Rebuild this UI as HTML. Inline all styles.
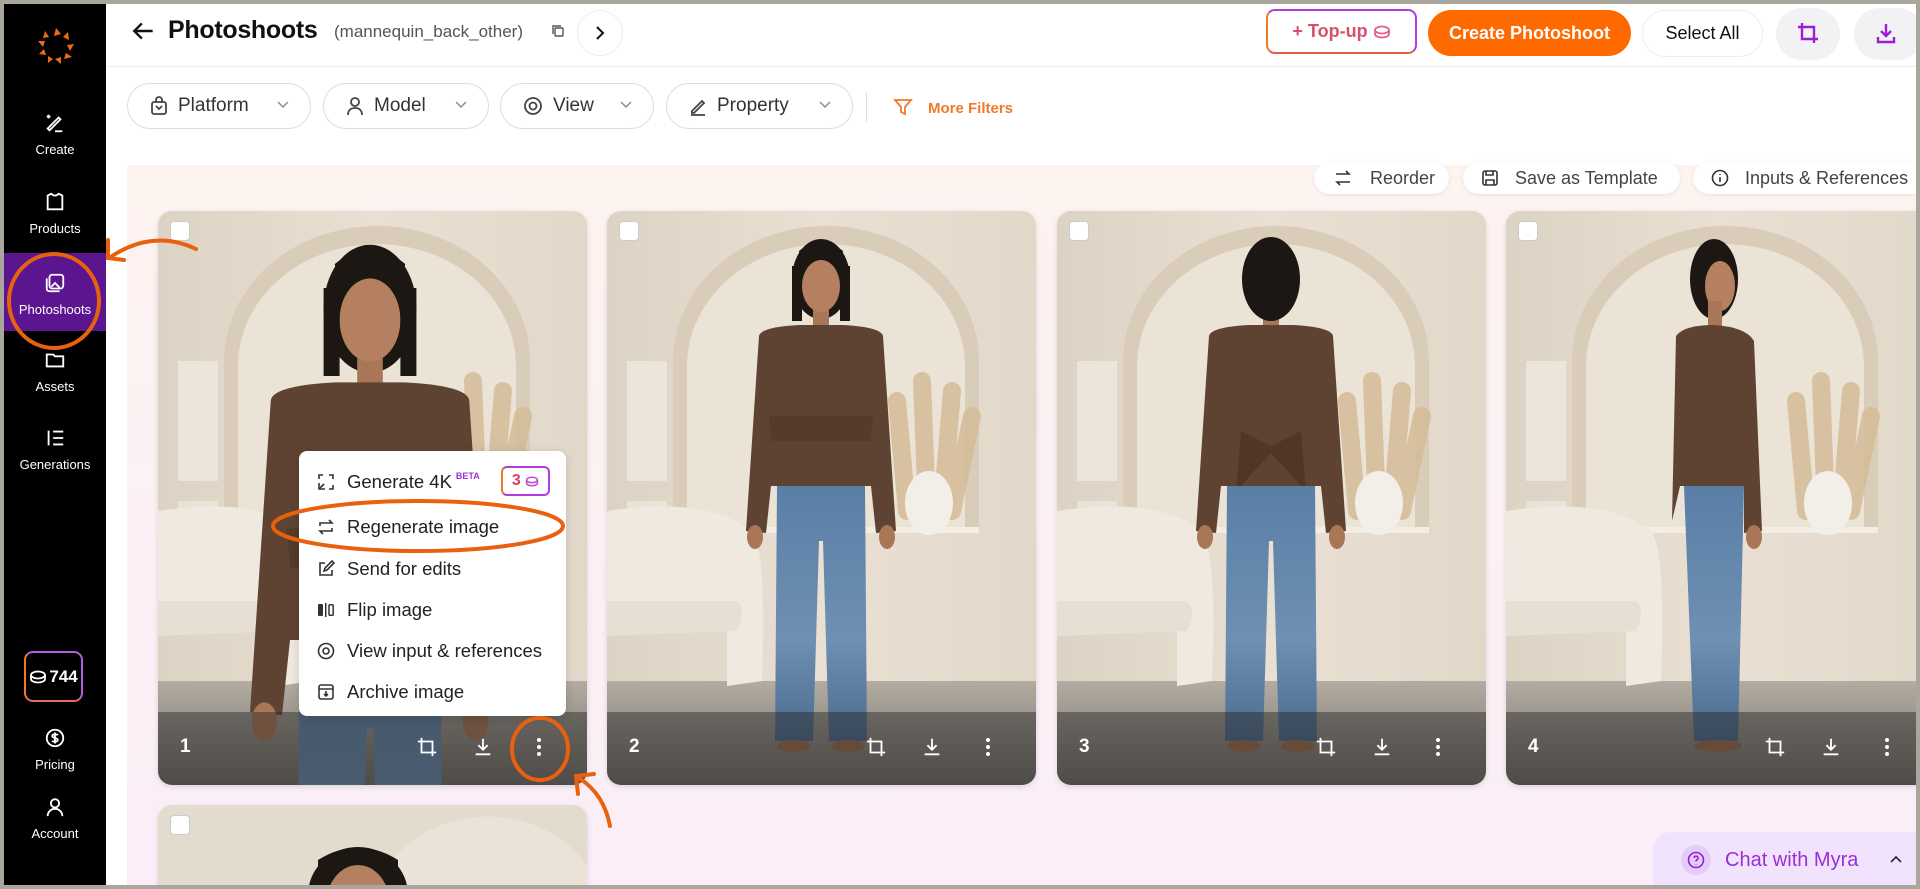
<!DOCTYPE html>
<html><head><meta charset="utf-8">
<style>
*{box-sizing:border-box;margin:0;padding:0}
html,body{width:1920px;height:889px;overflow:hidden;background:#aaa69d;font-family:"Liberation Sans",Arial,sans-serif}
#app{position:absolute;left:4px;top:4px;width:1912px;height:881px;background:#fff;overflow:hidden}
.abs{position:absolute}
#sidebar{left:0;top:0;width:102px;height:881px;background:#000;color:#fff}
.nav{position:absolute;left:0;width:102px;text-align:center;font-size:13px;color:#fff}
.nav svg{display:block;margin:0 auto 8px}
.pill{position:absolute;top:79px;height:46px;border:1px solid #dedee2;border-radius:23px;display:flex;align-items:center;padding-left:22px;font-size:19px;color:#333;background:#fff}
.pill .chev{position:absolute;right:20px;top:16px}
.card{position:absolute;width:429px;height:574px;border-radius:14px;overflow:hidden;box-shadow:0 2px 6px rgba(0,0,0,.12)}
.card svg.scene{position:absolute;left:0;top:0}
.cb{position:absolute;left:12px;top:10px;width:20px;height:20px;background:#fff;border-radius:4px;border:1px solid #ccc}
.bar{position:absolute;left:0;bottom:0;width:100%;height:73px;background:rgba(40,38,36,.45)}
.bar .n{position:absolute;left:22px;top:24px;color:#fff;font-size:19px;font-weight:bold}
.bar svg{position:absolute;top:24px}
.tb{position:absolute;top:158px;height:32px;background:#fff;border-radius:16px;box-shadow:0 1px 4px rgba(0,0,0,.08);font-size:18px;color:#444;display:flex;align-items:center}
.mi{position:absolute;left:18px;font-size:18.5px;color:#222;display:flex;align-items:center}
.mi svg{margin-right:12px}
</style></head><body>
<div id="app">
<svg width="0" height="0" style="position:absolute">
<defs>
<linearGradient id="wall" x1="0" y1="0" x2="1" y2="0"><stop offset="0" stop-color="#ddd3c4"/><stop offset=".5" stop-color="#e9e0d3"/><stop offset="1" stop-color="#e2d8ca"/></linearGradient>
<linearGradient id="floor" x1="0" y1="0" x2="0" y2="1"><stop offset="0" stop-color="#b3aca2"/><stop offset="1" stop-color="#6f6c68"/></linearGradient>
<linearGradient id="jean" x1="0" y1="0" x2="0" y2="1"><stop offset="0" stop-color="#5a7ea6"/><stop offset=".6" stop-color="#6e90b3"/><stop offset="1" stop-color="#4b6a8e"/></linearGradient>
<symbol id="scene" viewBox="0 0 429 574">
<rect width="429" height="574" fill="url(#wall)"/>
<rect x="20" y="150" width="40" height="120" fill="#f1ebe2" opacity=".7"/>
<rect x="20" y="290" width="40" height="120" fill="#f1ebe2" opacity=".6"/>
<path d="M66 318 V150 A153 135 0 0 1 372 150 V318 Z" fill="#d9ccb9"/>
<path d="M80 318 V155 A139 122 0 0 1 358 155 V318 Z" fill="#ebe3d6"/>
<rect x="66" y="316" width="306" height="6" fill="#f3ede4"/>
<rect x="0" y="470" width="429" height="104" fill="url(#floor)"/>
<path d="M0 300 Q100 285 145 320 Q160 340 155 470 L120 475 L120 420 L0 420 Z" fill="#efe9df"/>
<path d="M0 390 L130 390 Q140 400 130 420 L0 425 Z" fill="#e6dfd3"/>
<path d="M300 300 L290 190 M320 300 L315 170 M335 300 L345 180 M345 300 L365 205" stroke="#d4bc97" stroke-width="18" stroke-linecap="round" opacity=".85"/>
<ellipse cx="322" cy="292" rx="24" ry="32" fill="#f2eee8"/>
</symbol>
<symbol id="pfront" viewBox="-120 0 240 560" overflow="visible">
<ellipse cx="0" cy="38" rx="29" ry="40" fill="#1d1713"/>
<rect x="-8" y="60" width="16" height="30" fill="#a97657"/>
<ellipse cx="0" cy="45" rx="19" ry="26" fill="#b5805f"/>
<path d="M-19 30 Q0 5 19 30 L22 10 Q0 -8 -22 10Z" fill="#1d1713"/>
<rect x="-29" y="25" width="10" height="55" fill="#1d1713"/>
<rect x="19" y="25" width="10" height="55" fill="#1d1713"/>
<path d="M-62 95 Q-60 86 -22 84 L22 84 Q60 86 62 95 L75 290 L55 292 L50 245 L-50 245 L-55 292 L-75 290 Z" fill="#5f4332"/>
<path d="M-52 175 L52 175 L50 200 L-50 200Z" fill="#553b2c"/>
<ellipse cx="-66" cy="296" rx="8" ry="12" fill="#a97657"/>
<ellipse cx="66" cy="296" rx="8" ry="12" fill="#a97657"/>
<path d="M-44 245 L44 245 L46 500 L8 500 L2 300 L-2 300 L-8 500 L-46 500 Z" fill="url(#jean)"/>
<ellipse cx="-27" cy="505" rx="17" ry="6" fill="#9a6a4e"/>
<ellipse cx="27" cy="505" rx="17" ry="6" fill="#9a6a4e"/>
</symbol>
<symbol id="pback" viewBox="-120 0 240 560" overflow="visible">
<rect x="-8" y="60" width="16" height="30" fill="#a97657"/>
<path d="M-62 95 Q-60 86 -22 84 L22 84 Q60 86 62 95 L75 290 L55 292 L50 245 L-50 245 L-55 292 L-75 290 Z" fill="#5f4332"/>
<path d="M-30 190 L0 205 L30 190 L35 250 L0 212 L-35 250Z" fill="#4f3627"/>
<ellipse cx="0" cy="38" rx="29" ry="42" fill="#1d1713"/>
<ellipse cx="-66" cy="296" rx="8" ry="12" fill="#a97657"/>
<ellipse cx="66" cy="296" rx="8" ry="12" fill="#a97657"/>
<path d="M-44 245 L44 245 L46 500 L8 500 L2 300 L-2 300 L-8 500 L-46 500 Z" fill="url(#jean)"/>
<ellipse cx="-27" cy="505" rx="17" ry="6" fill="#9a6a4e"/>
<ellipse cx="27" cy="505" rx="17" ry="6" fill="#9a6a4e"/>
</symbol>
<symbol id="pside" viewBox="-120 0 240 560" overflow="visible">
<ellipse cx="0" cy="38" rx="24" ry="40" fill="#1d1713"/>
<ellipse cx="6" cy="45" rx="15" ry="25" fill="#b5805f"/>
<rect x="-6" y="60" width="14" height="30" fill="#a97657"/>
<path d="M-38 95 Q-30 84 0 84 Q32 86 40 100 L48 290 L30 292 L30 245 L-34 245 L-42 280 Z" fill="#5f4332"/>
<ellipse cx="40" cy="296" rx="8" ry="12" fill="#a97657"/>
<path d="M-30 245 L30 245 L24 500 L-20 500 Z" fill="url(#jean)"/>
<ellipse cx="4" cy="505" rx="24" ry="6" fill="#9a6a4e"/>
</symbol>
</defs>
</svg>

<!-- SIDEBAR -->
<div id="sidebar" class="abs">
<svg class="abs" style="left:30px;top:20px" width="44" height="44" viewBox="0 0 44 44">
<g fill="#f26a10">
<path d="M22 4 L27 10 L20 12Z"/><path d="M34 8 L35 16 L29 13Z"/><path d="M40 20 L36 27 L33 21Z"/><path d="M38 33 L30 35 L32 29Z"/><path d="M27 40 L21 35 L27 33Z"/><path d="M14 39 L14 32 L19 35Z"/><path d="M5 30 L10 25 L12 31Z"/><path d="M4 17 L11 17 L9 23Z"/><path d="M11 7 L15 13 L9 14Z"/>
</g></svg>
<div class="nav" style="top:108px"><svg width="22" height="22" viewBox="0 0 24 24" fill="none" stroke="#fff" stroke-width="2"><path d="M6 20 L18 8 L16 6 L4 18 Z"/><path d="M12 21h8"/><path d="M5 3v4M3 5h4"/></svg>Create</div>
<div class="nav" style="top:187px"><svg width="22" height="22" viewBox="0 0 24 24" fill="none" stroke="#fff" stroke-width="2"><path d="M8 3 L4 5 V20 H20 V5 L16 3 Q12 7 8 3Z"/></svg>Products</div>
<div class="nav" style="top:249px;height:78px;background:#5b168f;padding-top:19px"><svg width="22" height="22" viewBox="0 0 24 24" fill="none" stroke="#fff" stroke-width="2"><rect x="6" y="3" width="15" height="15" rx="3"/><path d="M3 7v11a3 3 0 0 0 3 3h11"/><path d="M8 16l4-4 5 5"/></svg>Photoshoots</div>
<div class="nav" style="top:345px"><svg width="22" height="22" viewBox="0 0 24 24" fill="none" stroke="#fff" stroke-width="2"><path d="M3 6h7l2 2h9v11H3z"/></svg>Assets</div>
<div class="nav" style="top:423px"><svg width="22" height="22" viewBox="0 0 24 24" fill="none" stroke="#fff" stroke-width="2"><path d="M10 5h11M10 12h11M10 19h11M5 4v16"/></svg>Generations</div>
<div class="abs" style="left:20px;top:647px;width:59px;height:51px;border-radius:9px;border:2px solid #b35de0;border-left-color:#f07a2a;border-bottom-color:#e06c60;display:flex;align-items:center;justify-content:center;font-size:17px;font-weight:bold;color:#fff"><svg width="18" height="14" viewBox="0 0 18 14" fill="none" stroke="#fff" stroke-width="1.8" style="margin-right:2px"><ellipse cx="9" cy="5" rx="7" ry="3.5"/><path d="M2 5v4c0 2 3 3.5 7 3.5s7-1.5 7-3.5V5"/></svg>744</div>
<div class="nav" style="top:723px"><svg width="22" height="22" viewBox="0 0 24 24" fill="none" stroke="#fff" stroke-width="2"><circle cx="12" cy="12" r="9"/><path d="M15 9c-1-1.5-6-1.5-6 1s6 1.5 6 4-5 2.5-6 1M12 6v12"/></svg>Pricing</div>
<div class="nav" style="top:792px"><svg width="22" height="22" viewBox="0 0 24 24" fill="none" stroke="#fff" stroke-width="2"><circle cx="12" cy="8" r="4.5"/><path d="M4 22c0-5 4-8 8-8s8 3 8 8"/></svg>Account</div>
</div>

<!-- HEADER -->
<svg class="abs" style="left:127px;top:14px" width="26" height="26" viewBox="0 0 24 24" fill="none" stroke="#111" stroke-width="2.2"><path d="M20 12H4M10 5l-7 7 7 7"/></svg>
<div class="abs" style="left:164px;top:12px;font-size:25px;font-weight:bold;color:#111;letter-spacing:-0.3px">Photoshoots</div>
<div class="abs" style="left:330px;top:18px;font-size:17px;color:#555">(mannequin_back_other)</div>
<svg class="abs" style="left:547px;top:20px" width="14" height="14" viewBox="0 0 14 14" fill="none" stroke="#555" stroke-width="1.4"><rect x="4" y="4" width="8" height="8" rx="1"/><path d="M2 10V2h8"/></svg>
<div class="abs" style="left:573px;top:6px;width:46px;height:46px;border-radius:23px;border:1px solid #eee;background:#fff"></div>
<svg class="abs" style="left:589px;top:21px" width="14" height="16" viewBox="0 0 14 16" fill="none" stroke="#111" stroke-width="2"><path d="M4 2l6 6-6 6"/></svg>

<div class="abs" style="left:1262px;top:5px;width:151px;height:45px;border-radius:9px;border:2px solid #b33be0;border-left-color:#f07a2a;border-bottom-color:#e0603a;display:flex;align-items:center;justify-content:center;font-size:18px;font-weight:bold;color:#d9506a">+&nbsp;Top-up&nbsp;<svg width="18" height="14" viewBox="0 0 18 14" fill="none" stroke="#e0608a" stroke-width="1.8"><ellipse cx="9" cy="5" rx="7" ry="3.5"/><path d="M2 5v4c0 2 3 3.5 7 3.5s7-1.5 7-3.5V5"/></svg></div>
<div class="abs" style="left:1424px;top:6px;width:203px;height:46px;border-radius:23px;background:#ff6a00;color:#fff;font-size:18px;font-weight:bold;display:flex;align-items:center;justify-content:center">Create Photoshoot</div>
<div class="abs" style="left:1638px;top:6px;width:121px;height:47px;border-radius:24px;border:1px solid #eee;background:#fff;color:#111;font-size:18px;display:flex;align-items:center;justify-content:center">Select All</div>
<div class="abs" style="left:1772px;top:4px;width:64px;height:52px;border-radius:26px;background:#f2f2f4"></div>
<svg class="abs" style="left:1792px;top:16px" width="24" height="26" viewBox="0 0 24 24" fill="none" stroke="#9b1fd6" stroke-width="2.4"><path d="M6 2v16h16M2 6h16v16"/></svg>
<div class="abs" style="left:1850px;top:4px;width:70px;height:52px;border-radius:26px;background:#f2f2f4"></div>
<svg class="abs" style="left:1870px;top:16px" width="24" height="26" viewBox="0 0 24 24" fill="none" stroke="#9b1fd6" stroke-width="2.4"><path d="M12 3v12M7 10l5 5 5-5M4 16v5h16v-5"/></svg>
<div class="abs" style="left:102px;top:62px;width:1810px;height:1px;background:#ececec"></div>

<!-- FILTERS -->
<div class="pill" style="left:123px;width:184px"><svg width="18" height="20" viewBox="0 0 18 20" fill="none" stroke="#444" stroke-width="1.8" style="margin-right:10px"><rect x="2" y="6" width="14" height="12" rx="2"/><path d="M6 6V4a3 3 0 0 1 6 0v2M6 10l3 3 3-3"/></svg>Platform<svg class="chev" width="14" height="10" viewBox="0 0 14 10" fill="none" stroke="#888" stroke-width="1.4"><path d="M2 2l5 5 5-5"/></svg></div>
<div class="pill" style="left:319px;width:166px"><svg width="18" height="20" viewBox="0 0 18 20" fill="none" stroke="#444" stroke-width="1.8" style="margin-right:10px"><circle cx="9" cy="6" r="4"/><path d="M2 19c0-5 3-7 7-7s7 2 7 7"/></svg>Model<svg class="chev" width="14" height="10" viewBox="0 0 14 10" fill="none" stroke="#888" stroke-width="1.4"><path d="M2 2l5 5 5-5"/></svg></div>
<div class="pill" style="left:496px;width:154px"><svg width="20" height="20" viewBox="0 0 20 20" fill="none" stroke="#444" stroke-width="1.8" style="margin-right:10px"><circle cx="10" cy="10" r="8"/><circle cx="10" cy="10" r="3.5"/></svg>View<svg class="chev" width="14" height="10" viewBox="0 0 14 10" fill="none" stroke="#888" stroke-width="1.4"><path d="M2 2l5 5 5-5"/></svg></div>
<div class="pill" style="left:662px;width:187px"><svg width="18" height="20" viewBox="0 0 18 20" fill="none" stroke="#444" stroke-width="1.8" style="margin-right:10px"><path d="M3 15L13 5l2 2L5 17H3zM2 19h14"/></svg>Property<svg class="chev" width="14" height="10" viewBox="0 0 14 10" fill="none" stroke="#888" stroke-width="1.4"><path d="M2 2l5 5 5-5"/></svg></div>
<div class="abs" style="left:862px;top:88px;width:1px;height:30px;background:#ddd"></div>
<svg class="abs" style="left:889px;top:93px" width="20" height="20" viewBox="0 0 20 20" fill="none" stroke="#f07a2a" stroke-width="1.8"><path d="M2 3h16l-6 7v7l-4-2v-5z"/></svg>
<div class="abs" style="left:924px;top:96px;font-size:15px;font-weight:bold;color:#f07a2a">More Filters</div>

<!-- CONTENT -->
<div class="abs" style="left:123px;top:161px;width:1789px;height:720px;background:linear-gradient(#fdf3ef,#fbeef8)"></div>
<div class="tb" style="left:1310px;width:135px;padding-left:20px"><svg width="18" height="18" viewBox="0 0 18 18" fill="none" stroke="#333" stroke-width="1.6" style="margin-right:18px"><path d="M2 5h13l-3-3M16 13H3l3 3"/></svg>Reorder</div>
<div class="tb" style="left:1459px;width:217px;padding-left:18px"><svg width="18" height="18" viewBox="0 0 18 18" fill="none" stroke="#333" stroke-width="1.6" style="margin-right:16px"><rect x="2" y="2" width="14" height="14" rx="2"/><path d="M5 2v4h7V2M5 16v-5h8v5"/></svg>Save as Template</div>
<div class="tb" style="left:1689px;width:240px;padding-left:18px"><svg width="18" height="18" viewBox="0 0 18 18" fill="none" stroke="#333" stroke-width="1.6" style="margin-right:16px"><circle cx="9" cy="9" r="7.5"/><path d="M9 8v5M9 5v1"/></svg>Inputs &amp; References</div>

<!-- Cards -->
<div class="card" style="left:154px;top:207px">
<svg class="scene" width="429" height="574"><use href="#scene" width="429" height="574"/><g transform="translate(212,37) scale(1.6)"><use href="#pfront" x="-120" width="240" height="560"/></g></svg>
<div class="cb"></div>
<div class="bar"><div class="n">1</div>
<svg style="left:258px" width="22" height="22" viewBox="0 0 24 24" fill="none" stroke="#fff" stroke-width="2"><path d="M6 2v16h16M2 6h16v16"/></svg>
<svg style="left:314px" width="22" height="22" viewBox="0 0 24 24" fill="none" stroke="#fff" stroke-width="2"><path d="M12 3v12M7 10l5 5 5-5M4 20h16"/></svg>
<svg style="left:372px" width="18" height="22" viewBox="0 0 18 22" fill="#fff"><circle cx="9" cy="4" r="2"/><circle cx="9" cy="11" r="2"/><circle cx="9" cy="18" r="2"/></svg></div>
</div>
<div class="card" style="left:603px;top:207px">
<svg class="scene" width="429" height="574"><use href="#scene" width="429" height="574"/><use href="#pfront" x="94" y="30" width="240" height="560"/></svg>
<div class="cb"></div>
<div class="bar"><div class="n">2</div>
<svg style="left:258px" width="22" height="22" viewBox="0 0 24 24" fill="none" stroke="#fff" stroke-width="2"><path d="M6 2v16h16M2 6h16v16"/></svg>
<svg style="left:314px" width="22" height="22" viewBox="0 0 24 24" fill="none" stroke="#fff" stroke-width="2"><path d="M12 3v12M7 10l5 5 5-5M4 20h16"/></svg>
<svg style="left:372px" width="18" height="22" viewBox="0 0 18 22" fill="#fff"><circle cx="9" cy="4" r="2"/><circle cx="9" cy="11" r="2"/><circle cx="9" cy="18" r="2"/></svg></div>
</div>
<div class="card" style="left:1053px;top:207px">
<svg class="scene" width="429" height="574"><use href="#scene" width="429" height="574"/><use href="#pback" x="94" y="30" width="240" height="560"/></svg>
<div class="cb"></div>
<div class="bar"><div class="n">3</div>
<svg style="left:258px" width="22" height="22" viewBox="0 0 24 24" fill="none" stroke="#fff" stroke-width="2"><path d="M6 2v16h16M2 6h16v16"/></svg>
<svg style="left:314px" width="22" height="22" viewBox="0 0 24 24" fill="none" stroke="#fff" stroke-width="2"><path d="M12 3v12M7 10l5 5 5-5M4 20h16"/></svg>
<svg style="left:372px" width="18" height="22" viewBox="0 0 18 22" fill="#fff"><circle cx="9" cy="4" r="2"/><circle cx="9" cy="11" r="2"/><circle cx="9" cy="18" r="2"/></svg></div>
</div>
<div class="card" style="left:1502px;top:207px">
<svg class="scene" width="429" height="574"><use href="#scene" width="429" height="574"/><use href="#pside" x="88" y="30" width="240" height="560"/></svg>
<div class="cb"></div>
<div class="bar"><div class="n">4</div>
<svg style="left:258px" width="22" height="22" viewBox="0 0 24 24" fill="none" stroke="#fff" stroke-width="2"><path d="M6 2v16h16M2 6h16v16"/></svg>
<svg style="left:314px" width="22" height="22" viewBox="0 0 24 24" fill="none" stroke="#fff" stroke-width="2"><path d="M12 3v12M7 10l5 5 5-5M4 20h16"/></svg>
<svg style="left:372px" width="18" height="22" viewBox="0 0 18 22" fill="#fff"><circle cx="9" cy="4" r="2"/><circle cx="9" cy="11" r="2"/><circle cx="9" cy="18" r="2"/></svg></div>
</div>
<div class="card" style="left:154px;top:801px;height:80px;border-radius:14px 14px 0 0">
<svg class="scene" width="429" height="80"><rect width="429" height="80" fill="#e4dbcf"/><path d="M230 80 V60 A120 110 0 0 1 429 60 V80Z" fill="#ebe3d8"/><ellipse cx="200" cy="90" rx="50" ry="48" fill="#1d1713"/><ellipse cx="200" cy="100" rx="32" ry="40" fill="#b5805f"/><path d="M160 80 Q200 40 240 80 L240 55 Q200 30 160 55Z" fill="#1d1713"/></svg>
<div class="cb"></div>
</div>

<!-- Menu -->
<div class="abs" style="left:295px;top:447px;width:267px;height:265px;background:#fff;border-radius:8px;box-shadow:0 2px 10px rgba(0,0,0,.15)">
<div class="mi" style="top:20px"><svg width="18" height="18" viewBox="0 0 18 18" fill="none" stroke="#333" stroke-width="1.6"><path d="M2 6V2h4M12 2h4v4M16 12v4h-4M2 10v6h6"/><path d="M3 15l4-4"/></svg>Generate 4K<sup style="font-size:9px;color:#a22ee0;font-weight:bold;margin-left:4px;align-self:flex-start">BETA</sup></div>
<div class="abs" style="left:202px;top:15px;width:49px;height:30px;border-radius:6px;border:2px solid #b33be0;border-left-color:#f07a2a;display:flex;align-items:center;justify-content:center;font-size:16px;font-weight:bold;color:#d9406a">3&nbsp;<svg width="14" height="11" viewBox="0 0 18 14" fill="none" stroke="#c04fd0" stroke-width="2"><ellipse cx="9" cy="5" rx="7" ry="3.5"/><path d="M2 5v4c0 2 3 3.5 7 3.5s7-1.5 7-3.5V5"/></svg></div>
<div class="mi" style="top:65px"><svg width="18" height="18" viewBox="0 0 18 18" fill="none" stroke="#333" stroke-width="1.6"><path d="M3 8V5h12l-3-3M15 10v3H3l3 3"/></svg>Regenerate image</div>
<div class="mi" style="top:107px"><svg width="18" height="18" viewBox="0 0 18 18" fill="none" stroke="#333" stroke-width="1.6"><path d="M8 3H3v12h12v-5M7 11l1-3 7-7 2 2-7 7z"/></svg>Send for edits</div>
<div class="mi" style="top:148px"><svg width="18" height="18" viewBox="0 0 18 18" fill="#333"><rect x="1" y="3" width="5" height="12" rx="1"/><rect x="8" y="2" width="1.5" height="14"/><rect x="12" y="3.8" width="4.2" height="10.4" rx="1" fill="none" stroke="#333" stroke-width="1.5"/></svg>Flip image</div>
<div class="mi" style="top:189px"><svg width="18" height="18" viewBox="0 0 18 18" fill="none" stroke="#333" stroke-width="1.6"><circle cx="9" cy="9" r="7.5"/><circle cx="9" cy="9" r="3"/></svg>View input &amp; references</div>
<div class="mi" style="top:230px"><svg width="18" height="18" viewBox="0 0 18 18" fill="none" stroke="#333" stroke-width="1.6"><rect x="2" y="2" width="14" height="14" rx="2"/><path d="M2 6h14M9 8v5M7 11l2 2 2-2"/></svg>Archive image</div>
</div>

<!-- Chat -->
<div class="abs" style="left:1649px;top:828px;width:270px;height:53px;background:#f1e3fd;border-radius:18px 0 0 0"></div>
<div class="abs" style="left:1677px;top:841px;width:30px;height:30px;border-radius:15px;background:#e6cdf9"></div>
<svg class="abs" style="left:1683px;top:847px" width="18" height="18" viewBox="0 0 18 18" fill="none" stroke="#8d22d0" stroke-width="1.6"><circle cx="9" cy="9" r="7.5"/><path d="M7 7a2 2 0 1 1 2.5 2c-.5.3-.5.8-.5 1.5M9 13v.5"/></svg>
<div class="abs" style="left:1721px;top:845px;font-size:20px;color:#9b2fd6">Chat with Myra</div>
<svg class="abs" style="left:1885px;top:850px" width="14" height="10" viewBox="0 0 14 10" fill="none" stroke="#333" stroke-width="1.8"><path d="M2 8l5-5 5 5"/></svg>

<!-- Annotations -->
<svg class="abs" style="left:0;top:0" width="1912" height="881" fill="none" stroke="#e8610f" stroke-width="4" stroke-linecap="round">
<ellipse cx="50" cy="297" rx="45" ry="47"/>
<path d="M192 245 Q150 225 108 252"/><path d="M104 236 L104 254 L120 256"/>
<ellipse cx="414" cy="522" rx="145" ry="25"/>
<ellipse cx="536" cy="745" rx="28" ry="31"/>
<path d="M606 822 Q600 790 575 774"/><path d="M574 790 L572 772 L590 770"/>
</svg>
</div>
</body></html>
